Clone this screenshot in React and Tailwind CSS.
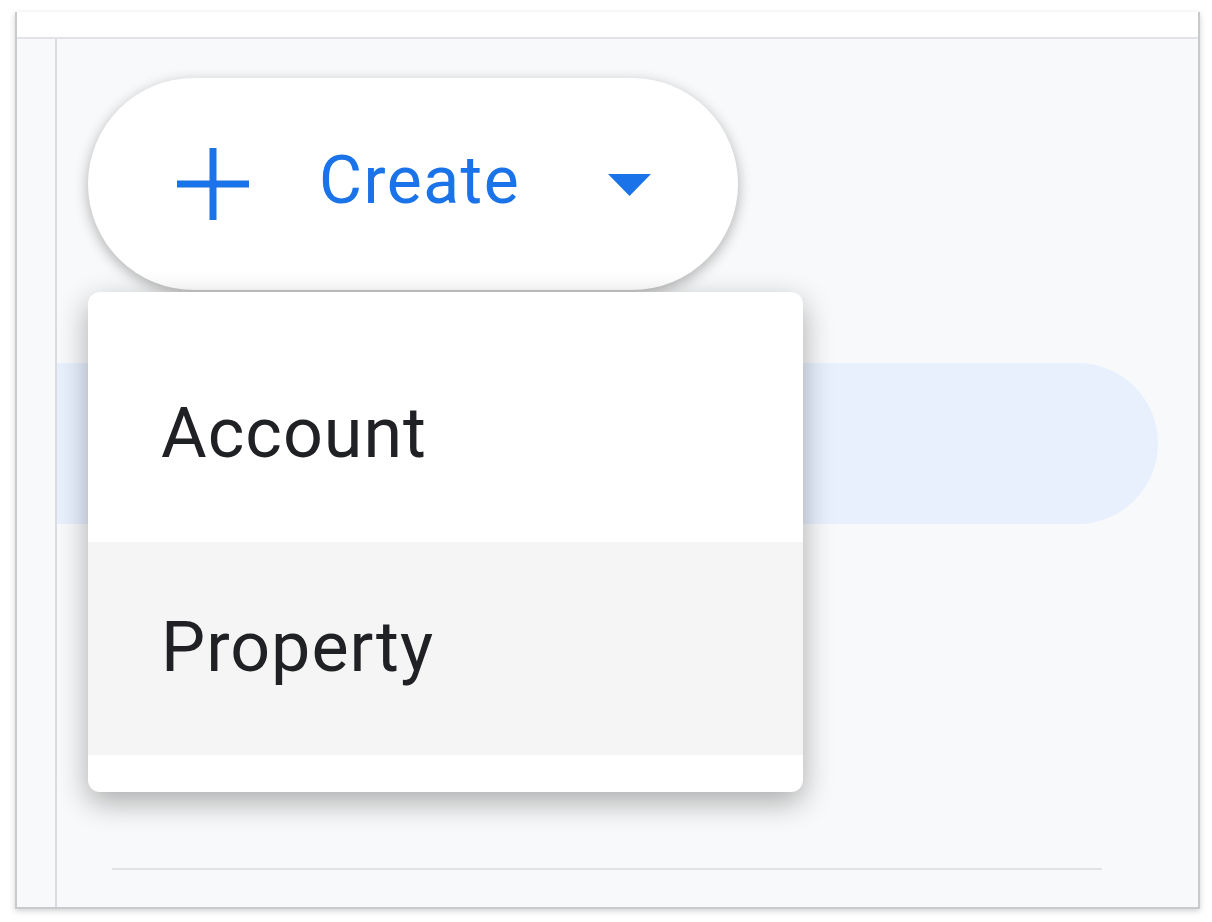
import React from 'react'

function PlusIcon() {
  return (
    <svg width="72" height="72" viewBox="0 0 72 72" className="shrink-0">
      <rect x="32.5" y="0" width="7" height="72" fill="#1a73e8" />
      <rect x="0" y="32.5" width="72" height="7" fill="#1a73e8" />
    </svg>
  );
}

function CaretDown() {
  return (
    <svg width="43" height="22" viewBox="0 0 43 22" className="shrink-0">
      <path d="M0 0 L43 0 L21.5 22 Z" fill="#1a73e8" />
    </svg>
  );
}

export default function App() {
  return (
    <div className="w-[1212px] h-[922px] bg-white pt-[12px] pl-[15px]" style={{ fontFamily: 'Roboto, "Liberation Sans", sans-serif' }}>
      <div className="w-[1185px] h-[897px] flex flex-col border-l-2 border-r-2 border-b-2 border-[#c9cacc] shadow-[0_2px_6px_rgba(0,0,0,0.18)]">
        <div className="h-[27px] bg-white border-b-2 border-[#e1e3e6] shrink-0"></div>
        <div className="flex flex-1">
          <div className="w-[40px] bg-[#f8f9fa] border-r-2 border-[#dadce0] shrink-0"></div>
          <div className="relative flex-1 bg-[#f8f9fa] pt-[39px] overflow-hidden">
            <button className="ml-[31px] w-[650px] h-[212px] rounded-full bg-white shadow-[0_4px_14px_rgba(0,0,0,0.3)] flex items-center pl-[89px]">
              <PlusIcon />
              <span className="ml-[70px] text-[66px] leading-none font-normal text-[#1a73e8] tracking-[1.5px] -mt-[6px]">Create</span>
              <span className="ml-[88px] mt-[2px]"><CaretDown /></span>
            </button>

            <div className="mt-[73px] w-[1101px] h-[161px] bg-[#e8f0fe] rounded-r-full"></div>

            <div className="mt-[344px] ml-[55px] w-[990px] h-[2px] bg-[#e0e2e5]"></div>

            <div className="absolute left-[31px] top-[253px] w-[715px] h-[500px] bg-white rounded-[12px] overflow-hidden shadow-[0_10px_30px_rgba(0,0,0,0.32)]">
              <div className="h-[250px] pt-[106px] pl-[73px] text-[70px] leading-none tracking-[1px] text-[#202124]">Account</div>
              <div className="h-[213px] pt-[70px] pl-[73px] bg-[#f5f5f5] text-[70px] leading-none tracking-[1px] text-[#202124]">Property</div>
            </div>
          </div>
        </div>
      </div>
    </div>
  )
}
